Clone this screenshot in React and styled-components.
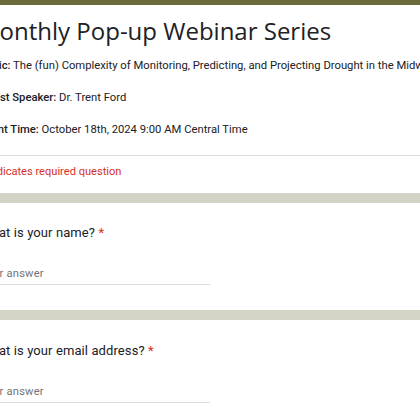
import React from 'react'
import styled, { createGlobalStyle } from 'styled-components'

const GlobalStyle = createGlobalStyle`
  html, body {
    margin: 0;
    padding: 0;
    background: #ffffff;
    overflow: hidden;
  }
  body {
    font-family: Roboto, "Liberation Sans", sans-serif;
    color: #202124;
  }
`

const TopBar = styled.div`
  height: 5px;
  background: #6b6a3b;
`

const Sheet = styled.div`
  margin-left: -20px;
  width: calc(100% + 20px);
`

const Card = styled.section`
  background: #ffffff;
  padding: ${({ $top }) => $top || 0}px 0 ${({ $bottom }) => $bottom || 0}px;
`

const Title = styled.h1`
  margin: 0 0 0 -2px;
  height: 45px;
  line-height: 52px;
  font-family: "Open Sans", Roboto, sans-serif;
  font-weight: 400;
  font-size: 24px;
  white-space: nowrap;
  color: #202124;
`

const InfoRow = styled.p`
  margin: 0;
  height: 32px;
  line-height: 32px;
  font-size: 11.25px;
  white-space: nowrap;
  color: #202124;

  b {
    font-weight: 500;
  }
`

const Divider = styled.hr`
  border: none;
  border-top: 1px solid #dadce0;
  margin: 9px 0 0 0;
  width: 100%;
`

const Required = styled.p`
  margin: 0;
  height: 32px;
  line-height: 32px;
  font-size: 11.1px;
  color: #d93025;
  padding-bottom: 5px;
`

const Band = styled.div`
  height: 10px;
  background: #d4d4c6;
`

const Question = styled.div`
  font-size: 13px;
  line-height: 24px;
  color: #202124;
  white-space: nowrap;
  letter-spacing: 0.1px;

  span {
    color: #d93025;
  }
`

const Answer = styled.div`
  margin-top: 19px;
  width: 230px;
  height: 20px;
  line-height: 20px;
  font-size: 11.2px;
  color: #70757a;
  border-bottom: 1px solid #dadce0;
  letter-spacing: 0.2px;
`

const QuestionCard = ({ label, top }) => (
  <Card $top={top} $bottom={25}>
    <Question>
      {label} <span>*</span>
    </Question>
    <Answer>Your answer</Answer>
  </Card>
)

export default function App() {
  return (
    <>
      <GlobalStyle />
      <TopBar />
      <Sheet>
        <Card>
          <Title>Monthly Pop-up Webinar Series</Title>
          <InfoRow>
            <b>Topic:</b> The (fun) Complexity of Monitoring, Predicting, and Projecting Drought in the Midwest
          </InfoRow>
          <InfoRow>
            <b>Guest Speaker:</b> Dr. Trent Ford
          </InfoRow>
          <InfoRow>
            <b>Event Time:</b> October 18th, 2024 9:00 AM Central Time
          </InfoRow>
          <Divider />
          <Required>* Indicates required question</Required>
        </Card>
        <Band />
        <QuestionCard label="What is your name?" top={18} />
        <Band />
        <QuestionCard label="What is your email address?" top={19} />
      </Sheet>
    </>
  )
}
